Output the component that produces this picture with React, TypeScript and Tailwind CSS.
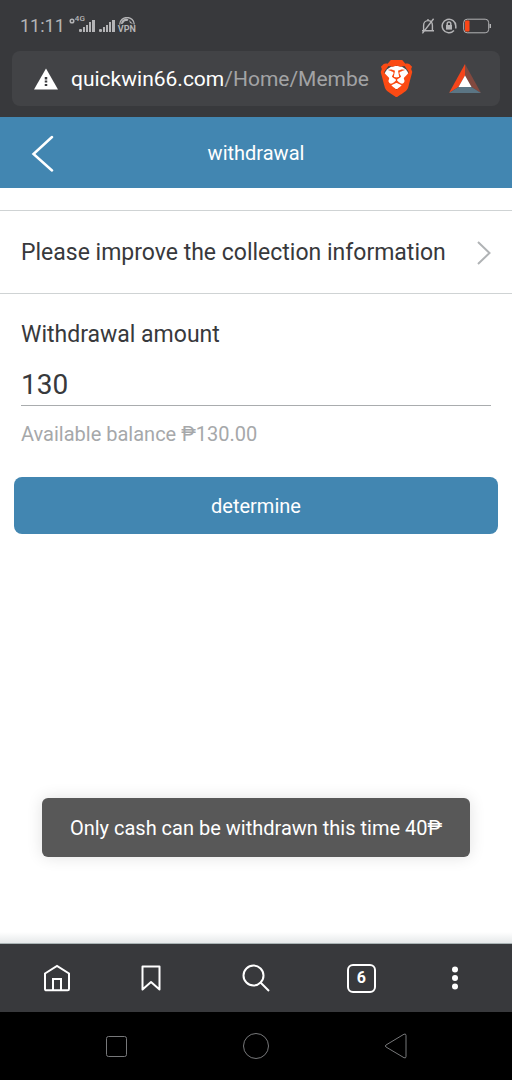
import { useState } from 'react'
import type { ReactNode } from 'react'
import { SiBrave } from 'react-icons/si'

function SignalBars() {
  return (
    <svg viewBox="0 0 16 14" className="h-3.5 w-4" fill="currentColor">
      <rect x="0" y="10" width="3" height="3" rx="1" />
      <rect x="4" y="8" width="2" height="5" />
      <rect x="7" y="6" width="2" height="7" />
      <rect x="10" y="3" width="2" height="10" />
      <rect x="13" y="1" width="3" height="12" />
    </svg>
  )
}

function VpnIcon() {
  return (
    <span className="flex w-4 flex-col items-center">
      <svg viewBox="0 0 16 8" className="h-2 w-4">
        <path d="M0.7 7.5a7.300 7 0 0 1 14.600 0" fill="none" stroke="currentColor" strokeWidth="1.3" />
        <path d="M2 7C2 4 4 2 7 1.500c2 0 3 1 2 2s-3 0-4 1.500S4 7 2 7zM10 3l4 4-3-1z" fill="currentColor" />
      </svg>
      <span className="text-[9px] leading-[9px] font-bold">VPN</span>
    </span>
  )
}

function StatusBar() {
  return (
    <div className="flex h-[51px] items-center justify-between pr-[21px] pl-5 text-[#b4b4b6]">
      <div className="flex items-center">
        <span className="text-lg leading-6">11:11</span>
        <svg viewBox="0 0 6 6" className="mb-2.5 ml-1 size-1.5">
          <circle cx="3" cy="3" r="1.800" fill="none" stroke="currentColor" strokeWidth="1.500" />
        </svg>
        <div className="ml-1 flex items-center gap-1">
          <div className="relative">
            <SignalBars />
            <span className="absolute -top-1 -left-1 text-[8px] leading-2 font-medium">4G</span>
          </div>
          <SignalBars />
          <VpnIcon />
        </div>
      </div>
      <div className="flex items-center gap-1.5">
        <svg viewBox="0 0 14 16" className="h-4 w-3.5" fill="none" stroke="currentColor" strokeWidth="1.400">
          <path d="M1 12.700h12M2.600 12.500V7.500C2.600 4.500 4.500 2.600 7 2.600s4.400 1.900 4.400 4.900v5M7 2.500V1M12.600 0.800L1.400 15.400" />
        </svg>
        <svg viewBox="0 0 16 16" className="h-4 w-4" fill="none" stroke="currentColor" strokeWidth="1.500">
          <path d="M13 12.600A6.800 6.800 0 1 1 14.800 8v2.500M11.500 13.800a6.800 6.800 0 0 1-3.500 1" />
          <rect x="5" y="7" width="6" height="4.600" fill="currentColor" stroke="none" />
          <path d="M6.200 7V5.800a1.800 1.800 0 0 1 3.600 0V7" />
        </svg>
        <svg viewBox="0 0 28 16" className="h-4 w-7">
          <rect x="0.700" y="1.200" width="25" height="13.600" rx="3.500" fill="none" stroke="currentColor" />
          <rect x="2" y="2.500" width="4.500" height="11" rx="1" fill="#fa4616" />
          <path d="M26.500 6v4H28V6z" fill="currentColor" />
        </svg>
      </div>
    </div>
  )
}

function AddressBar() {
  return (
    <div className="mx-3 mb-[11px] flex h-[55px] items-center rounded-lg bg-[#424346] pr-[19px] pl-[21px]">
      <svg viewBox="0 0 26 22" className="h-[22px] w-[26px] shrink-0">
        <path d="M13 0.500L25 21.500H1z" fill="#fff" />
        <path d="M13 9v2.500M13 12.500v2M13 16v2" stroke="#38393c" strokeWidth="2.500" />
      </svg>
      <div className="ml-3 min-w-0 flex-1 overflow-hidden text-[21px] leading-6 whitespace-nowrap text-[#a2a3a5]">
        <span className="text-white">quickwin66.com</span>/Home/Membe
      </div>
      <button aria-label="Brave Shields" className="relative ml-2 shrink-0">
        <span className="absolute inset-x-1.5 top-1.5 bottom-2 rounded-xl bg-white" />
        <SiBrave className="relative size-[37px] text-[#fb4a14]" />
      </button>
      <button aria-label="Brave Rewards" className="ml-[34px] shrink-0">
        <svg viewBox="0 0 32 30" className="h-[30px] w-8">
          <path d="M16 0L0 29l9.500-6L16 11.500z" fill="#f5451b" />
          <path d="M16 0l16 29-9.500-6L16 11.500z" fill="#82493f" />
          <path d="M0 29h32l-9.500-6h-13z" fill="#5b7584" />
          <path d="M16 11.500L22.500 23h-13z" fill="#fff" />
        </svg>
      </button>
    </div>
  )
}

function NavButton({ label, children }: { label: string; children: ReactNode }) {
  return (
    <button aria-label={label} className="flex h-full items-center justify-center">
      {children}
    </button>
  )
}

function BrowserNav() {
  return (
    <nav className="grid h-[68px] grid-cols-[86fr_100fr_110fr_100fr_86fr] bg-[#38393c] px-3.5 text-white">
      <NavButton label="Home">
        <svg viewBox="0 0 28 28" className="size-7" fill="none" stroke="currentColor" strokeWidth="2">
          <path d="M2 9.500L14 2l12 7.500V25a1.300 1.300 0 0 1-1.300 1.300H3.300A1.300 1.300 0 0 1 2 25zM10 26V15h8v11" />
        </svg>
      </NavButton>
      <NavButton label="Bookmarks">
        <svg viewBox="0 0 20 28" className="h-7 w-5" fill="none" stroke="currentColor" strokeWidth="2">
          <path d="M1.500 2.500h17v23L10 18l-8.500 7.500z" strokeLinejoin="round" />
        </svg>
      </NavButton>
      <NavButton label="Search">
        <svg viewBox="0 0 28 28" className="size-7" fill="none" stroke="currentColor" strokeWidth="2">
          <circle cx="11.500" cy="11.500" r="10" />
          <path d="M18.500 18.500L27 27" />
        </svg>
      </NavButton>
      <NavButton label="Tabs">
        <span className="flex h-[29px] w-[29px] items-center justify-center rounded-md border-2 border-white text-base leading-5 font-bold">
          6
        </span>
      </NavButton>
      <NavButton label="Menu">
        <svg viewBox="0 0 8 24" className="h-6 w-2" fill="currentColor">
          <circle cx="4" cy="3.500" r="3" />
          <circle cx="4" cy="12" r="3" />
          <circle cx="4" cy="20.500" r="3" />
        </svg>
      </NavButton>
    </nav>
  )
}

function SystemNav() {
  return (
    <nav className="grid h-[68px] grid-cols-3 bg-black px-[46px] text-[#77787a]">
      <NavButton label="Recent apps">
        <svg viewBox="0 0 28 28" className="size-7" fill="none" stroke="currentColor">
          <rect x="4.500" y="4.500" width="20" height="20" rx="2" />
        </svg>
      </NavButton>
      <NavButton label="System home">
        <svg viewBox="0 0 28 28" className="size-7" fill="none" stroke="currentColor">
          <circle cx="14" cy="14" r="12.500" />
        </svg>
      </NavButton>
      <NavButton label="System back">
        <svg viewBox="0 0 28 28" className="size-7" fill="none" stroke="currentColor">
          <path d="M22 2.200Q24 1.400 24 3.500v21q0 2.100-2 1.200L4 15q-1.500-1 0-2z" />
        </svg>
      </NavButton>
    </nav>
  )
}

export default function App() {
  const [amount, setAmount] = useState('130')

  return (
    <div className="flex min-h-screen flex-col bg-white font-[Roboto,sans-serif] text-[#38393c]">
      <div className="bg-[#38393c]">
        <StatusBar />
        <AddressBar />
      </div>

      <header className="grid h-[71px] grid-cols-[1fr_auto_1fr] items-center bg-[#4286b1] text-white">
        <button aria-label="Back" className="ml-[31px] w-6">
          <svg viewBox="0 0 24 38" className="h-[38px] w-6" fill="none" stroke="currentColor" strokeWidth="2.500">
            <path d="M21 3L2.500 20 21 36.500" strokeLinecap="round" />
          </svg>
        </button>
        <h1 className="text-xl leading-6">withdrawal</h1>
      </header>

      <main className="relative flex-1 pt-[22px]">
        <a
          href="#collection"
          className="flex h-[84px] items-center justify-between border-y border-[#cfd3d4] px-[21px] pt-0.5 text-[23px] leading-8"
        >
          Please improve the collection information
          <svg viewBox="0 0 14 24" className="h-6 w-3.5 shrink-0" fill="none" stroke="#b0b3b5" strokeWidth="2">
            <path d="M1 1l11.500 11L1 23" />
          </svg>
        </a>

        <form onSubmit={(e) => e.preventDefault()}>
          <div className="px-[21px] pt-[25px]">
            <label htmlFor="amount" className="block text-[23px] leading-8">
              Withdrawal amount
            </label>
            <input
              id="amount"
              inputMode="numeric"
              value={amount}
              onChange={(e) => setAmount(e.target.value)}
              className="mt-[11px] block h-11 w-full border-b border-[#a9acae] pt-0.5 text-[28px] leading-8 outline-none"
            />
            <p className="mt-3 text-xl leading-8 text-[#a6a8aa]">Available balance ₱130.00</p>
          </div>
          <div className="mt-[27px] px-3.5">
            <button type="submit" className="h-[57px] w-full rounded-lg bg-[#4286b1] text-xl leading-6 text-white">
              determine
            </button>
          </div>
        </form>

        <div
          role="status"
          className="absolute inset-x-[42px] bottom-[87px] flex h-[59px] items-center justify-center rounded-md bg-[#585858] text-xl leading-6 text-white shadow-[0_0_16px_rgba(0,0,0,0.12)]"
        >
          Only cash can be withdrawn this time 40₱
        </div>
        <div className="absolute inset-x-0 bottom-0 h-3 border-b border-[#aab4b5] bg-linear-to-b from-transparent to-[#e6e9ea]" />
      </main>

      <BrowserNav />
      <SystemNav />
    </div>
  )
}
